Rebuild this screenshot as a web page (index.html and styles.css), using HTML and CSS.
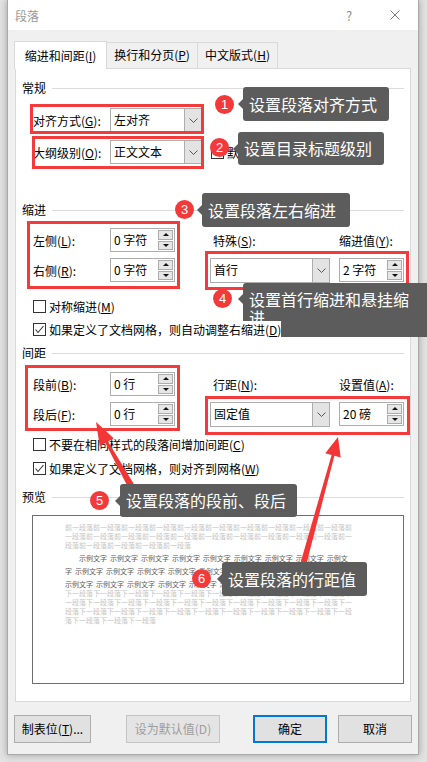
FILE: index.html
```html
<!DOCTYPE html>
<html>
<head>
<meta charset="utf-8">
<title>段落</title>
<link rel="stylesheet" href="styles.css">
</head>
<body>
<div id="window">
  <div id="titlebar">
    <span class="title">段落</span>
    <span class="capbtn">?</span>
    <span class="capbtn">
      <svg width="10" height="10" viewBox="0 0 10 10"><path d="M0.5 0.5L9.5 9.5M9.5 0.5L0.5 9.5" stroke="#7a7a7a" stroke-width="1" fill="none"/></svg>
    </span>
  </div>

  <div id="tabs">
    <div class="tab active t1">缩进和间距(<u>I</u>)</div>
    <div class="tab t2">换行和分页(<u>P</u>)</div>
    <div class="tab t3">中文版式(<u>H</u>)</div>
  </div>

  <div id="panel">
    <div class="group">常规<span class="rule"></span></div>
    <div class="row first">
      <span class="label">对齐方式(<u>G</u>):</span>
      <div class="combo"><span class="val">左对齐</span><span class="drop"><svg width="9" height="5" viewBox="0 0 9 5"><polyline points="0.5,0.5 4.5,4.5 8.5,0.5" fill="none" stroke="#555"/></svg></span></div>
    </div>
    <div class="row">
      <span class="label">大纲级别(<u>O</u>):</span>
      <div class="combo"><span class="val">正文文本</span><span class="drop"><svg width="9" height="5" viewBox="0 0 9 5"><polyline points="0.5,0.5 4.5,4.5 8.5,0.5" fill="none" stroke="#555"/></svg></span></div>
      <span class="check fold"><span class="box"></span>默认情况下折叠(<u>E</u>)</span>
    </div>

    <div class="group g-indent">缩进<span class="rule"></span></div>
    <div class="grid g1">
      <span class="label">左侧(<u>L</u>):</span>
      <div class="spin"><span class="val">0 字符</span><span class="arrows"><span class="up"></span><span class="down"></span></span></div>
      <span class="label side">特殊(<u>S</u>):</span>
      <span class="label">缩进值(<u>Y</u>):</span>
      <span class="label">右侧(<u>R</u>):</span>
      <div class="spin"><span class="val">0 字符</span><span class="arrows"><span class="up"></span><span class="down"></span></span></div>
      <div class="combo wide"><span class="val">首行</span><span class="drop"><svg width="9" height="5" viewBox="0 0 9 5"><polyline points="0.5,0.5 4.5,4.5 8.5,0.5" fill="none" stroke="#555"/></svg></span></div>
      <div class="spin"><span class="val">2 字符</span><span class="arrows"><span class="up"></span><span class="down"></span></span></div>
    </div>
    <div class="check c1"><span class="box"></span>对称缩进(<u>M</u>)</div>
    <div class="check c2"><span class="box on"><svg width="11" height="11" viewBox="0 0 11 11"><polyline points="1.5,5.5 4,8.5 9.5,2" fill="none" stroke="#333" stroke-width="1.1"/></svg></span><span class="raised">如果定义了文档网格，则自动调整右缩进(<u>D</u>)</span></div>

    <div class="group g-space">间距<span class="rule"></span></div>
    <div class="grid g2">
      <span class="label">段前(<u>B</u>):</span>
      <div class="spin"><span class="val">0 行</span><span class="arrows"><span class="up"></span><span class="down"></span></span></div>
      <span class="label side">行距(<u>N</u>):</span>
      <span class="label">设置值(<u>A</u>):</span>
      <span class="label">段后(<u>F</u>):</span>
      <div class="spin"><span class="val">0 行</span><span class="arrows"><span class="up"></span><span class="down"></span></span></div>
      <div class="combo wide"><span class="val">固定值</span><span class="drop"><svg width="9" height="5" viewBox="0 0 9 5"><polyline points="0.5,0.5 4.5,4.5 8.5,0.5" fill="none" stroke="#555"/></svg></span></div>
      <div class="spin"><span class="val">20 磅</span><span class="arrows"><span class="up"></span><span class="down"></span></span></div>
    </div>
    <div class="check c3"><span class="box"></span>不要在相同样式的段落间增加间距(<u>C</u>)</div>
    <div class="check c4"><span class="box on"><svg width="11" height="11" viewBox="0 0 11 11"><polyline points="1.5,5.5 4,8.5 9.5,2" fill="none" stroke="#333" stroke-width="1.1"/></svg></span>如果定义了文档网格，则对齐到网格(<u>W</u>)</div>

    <div class="group g-preview">预览<span class="rule"></span></div>
    <div class="preview">
      <p class="ghost">前一段落前一段落前一段落前一段落前一段落前一段落前一段落前一段落前一段落前一段落前一段落前一段落前一段落前一段落前一段落前一段落前一段落前一段落前一段落前一段落前一段落前一段落前一段落前一段落前一段落</p>
      <p class="sample">示例文字 示例文字 示例文字 示例文字 示例文字 示例文字 示例文字 示例文字 示例文字 示例文字 示例文字 示例文字 示例文字 示例文字 示例文字 示例文字 示例文字 示例文字 示例文字 示例文字 示例文字 示例文字 示例文字 示例文字 示例文字 示例文字</p>
      <p class="ghost after">下一段落下一段落下一段落下一段落下一段落下一段落下一段落下一段落下一段落下一段落下一段落下一段落下一段落下一段落下一段落下一段落下一段落下一段落下一段落下一段落下一段落下一段落下一段落下一段落下一段落下一段落下一段落下一段落下一段落下一段落下一段落下一段落下一段落下一段落</p>
    </div>
  </div>

  <div class="buttons">
    <div class="btn tabstop">制表位(<u>T</u>)...</div>
    <div class="btn disabled">设为默认值(D)</div>
    <div class="btn ok">确定</div>
    <div class="btn cancel">取消</div>
  </div>
</div>

<!-- callouts -->
<div class="hl hl1"></div>
<div class="hl hl2"></div>
<div class="hl hl3"></div>
<div class="hl hl4"></div>
<div class="hl hl5"></div>
<div class="hl hl6"></div>

<svg class="arrows-layer" width="427" height="762" viewBox="0 0 427 762">
  <polygon points="96,422 113.7,438.3 108,441.5 135.5,486.7 129.4,490.1 105.4,442.9 99.7,446.1" fill="#f23636"/>
  <polygon points="338,437 340.7,457.4 334.4,455.7 305.9,565.8 300.1,564.2 331.6,454.9 325.3,453.2" fill="#f23636"/>
</svg>

<div class="tip tip1">设置段落对齐方式</div>
<div class="tip tip2">设置目录标题级别</div>
<div class="tip tip3">设置段落左右缩进</div>
<div class="tip tip4">设置首行缩进和悬挂缩进</div>
<div class="tip tip5">设置段落的段前、段后</div>
<div class="tip tip6">设置段落的行距值</div>

<div class="badge b1">1</div>
<div class="badge b2">2</div>
<div class="badge b3">3</div>
<div class="badge b4">4</div>
<div class="badge b5">5</div>
<div class="badge b6">6</div>
</body>
</html>
```

FILE: styles.css
```css
* {
box-sizing: border-box;
}

body {
margin: 0;
width: 427px;
height: 762px;
overflow: hidden;
position: relative;
background: #e2e2e2;
font-family: "Noto Sans CJK SC", "Noto Sans", sans-serif;
font-size: 12px;
color: #000;
}

u {
text-underline-offset: 1px;
}

/* dialog frame */
#window {
margin-left: 7px;
width: 412px;
height: 755px;
background: #f0f0f0;
border: 1px solid #a9a9a9;
border-top: 0;
box-shadow: 0 0 7px rgba(0, 0, 0, 0.3);
}

#titlebar {
height: 30px;
background: #fff;
display: flex;
align-items: center;
padding-left: 7px;
}

#titlebar .title {
flex: 1;
color: #9a9a9a;
}

.capbtn {
width: 46px;
height: 30px;
display: flex;
align-items: center;
justify-content: center;
color: #8c8c8c;
font-size: 13px;
}

/* tabs */
#tabs {
margin-top: 10px;
height: 28px;
display: flex;
align-items: flex-end;
padding-left: 6px;
}

.tab {
height: 26px;
line-height: 24px;
border: 1px solid #d9d9d9;
border-bottom: 0;
background: #f0f0f0;
text-align: center;
margin-right: -1px;
}

.tab.active {
height: 28px;
line-height: 28px;
background: #fff;
position: relative;
z-index: 1;
margin-bottom: -1px;
}

.t1 { width: 93px; }
.t2 { width: 92px; }
.t3 { width: 81px; }

#panel {
margin-left: 7px;
width: 396px;
height: 634px;
background: #fff;
border: 1px solid #d9d9d9;
padding: 11px 0 0 6px;
}

/* group headings with rule */
.group {
display: flex;
align-items: center;
height: 16px;
line-height: 16px;
}

.group .rule {
flex: 1;
height: 1px;
background: #dcdcdc;
margin: 0 6px 0 6px;
}

.g-indent { margin-top: 38px; }
.g-space { margin-top: 8px; }
.g-preview { margin-top: 13px; }

.row {
display: flex;
align-items: center;
height: 24px;
padding-left: 11px;
margin-top: 8px;
}

.row.first {
margin-top: 12px;
}

.label {
width: 77px;
flex: none;
white-space: nowrap;
}

.grid .label {
width: auto;
}

.label.side {
padding-left: 3px;
}

/* combo boxes */
.combo {
width: 92px;
height: 24px;
border: 1px solid #adadad;
background: #fff;
display: flex;
flex: none;
}

.combo.wide {
width: 120px;
height: 25px;
}

.combo .val,
.spin .val {
flex: 1;
padding-left: 3px;
line-height: 22px;
white-space: nowrap;
}

.combo .drop {
width: 17px;
background: #e3e3e3;
border-left: 1px solid #adadad;
display: flex;
align-items: center;
justify-content: center;
}

/* spinners */
.spin {
width: 65px;
height: 24px;
border: 1px solid #adadad;
background: #fff;
display: flex;
}

.spin .arrows {
width: 16px;
display: flex;
flex-direction: column;
padding: 1px 1px 1px 0;
gap: 1px;
}

.spin .up,
.spin .down {
flex: 1;
background: #e6e6e6;
border: 1px solid #acacac;
display: flex;
align-items: center;
justify-content: center;
}

.spin .up::after {
content: "";
border-left: 3px solid transparent;
border-right: 3px solid transparent;
border-bottom: 3px solid #111;
}

.spin .down::after {
content: "";
border-left: 3px solid transparent;
border-right: 3px solid transparent;
border-top: 3px solid #111;
}

.grid {
display: grid;
grid-template-columns: 77px 100px 129px 65px;
grid-template-rows: 24px 24px;
row-gap: 6px;
align-items: center;
padding-left: 11px;
}

.g1 { margin-top: 10px; }
.g2 { margin-top: 11px; }

/* check boxes */
.check {
display: flex;
align-items: center;
height: 16px;
padding-left: 11px;
white-space: nowrap;
}

.check .box {
width: 13px;
height: 13px;
border: 1px solid #333;
background: #fff;
margin-right: 3px;
display: flex;
align-items: center;
justify-content: center;
flex: none;
}

.fold { padding-left: 9px; }
.c1 { margin-top: 16px; }
.c2 { margin-top: 7px; }
.c3 { margin-top: 10px; }
.c4 { margin-top: 8px; }

.raised {
position: relative;
z-index: 6;
background: #fff;
}

/* preview pane */
.preview {
margin: 10px 0 0 10px;
width: 372px;
height: 169px;
border: 1px solid #6e6e6e;
background: #fff;
padding: 7px 0 0 32px;
}

.preview p {
margin: 0;
width: 288px;
font-size: 7px;
line-height: 9px;
}

.preview .ghost {
color: #c4c4c4;
}

.preview .sample {
color: #5c5c5c;
line-height: 13px;
text-indent: 14px;
word-spacing: 1.4px;
margin-top: 2px;
}

.preview .after {
margin-top: -2px;
}

/* bottom buttons */
.buttons {
display: flex;
margin-top: 13px;
padding-left: 6px;
}

.btn {
height: 28px;
line-height: 26px;
border: 1px solid #adadad;
background: #e1e1e1;
text-align: center;
}

.tabstop { width: 77px; }

.disabled {
width: 94px;
margin-left: 35px;
color: #9d9d9d;
border-color: #c4c4c4;
background: #e4e4e4;
}

.ok {
width: 74px;
margin-left: 33px;
border: 2px solid #0078d7;
line-height: 24px;
}

.cancel {
width: 74px;
margin-left: 11px;
}

/* red highlight frames */
.hl {
position: absolute;
border: 3px solid #f33b3b;
z-index: 2;
}

.hl1 { left: 30px; top: 104px; width: 174px; height: 30px; }
.hl2 { left: 32px; top: 136px; width: 172px; height: 33px; }
.hl3 { left: 27px; top: 221px; width: 153px; height: 68px; }
.hl4 { left: 205px; top: 251px; width: 204px; height: 39px; }
.hl5 { left: 25px; top: 365px; width: 155px; height: 66px; }
.hl6 { left: 205px; top: 396px; width: 205px; height: 39px; }

.arrows-layer {
position: absolute;
left: 0;
top: 0;
z-index: 3;
}

/* dark callout notes */
.tip {
position: absolute;
background: #5c5c5c;
color: #fff;
font-size: 16px;
border-radius: 3px;
padding-left: 6px;
white-space: nowrap;
z-index: 5;
}

.tip::before {
content: "";
position: absolute;
left: -5px;
top: calc(50% - 5px);
border-top: 5px solid transparent;
border-bottom: 5px solid transparent;
border-right: 5px solid #5c5c5c;
}

.tip1 { left: 243px; top: 87px; width: 146px; height: 34px; line-height: 34px; }
.tip2 { left: 238px; top: 132px; width: 146px; height: 33px; line-height: 33px; }
.tip3 { left: 202px; top: 193px; width: 148px; height: 34px; line-height: 34px; }
.tip5 { left: 120px; top: 484px; width: 177px; height: 33px; line-height: 33px; }
.tip6 { left: 222px; top: 562px; width: 145px; height: 34px; line-height: 34px; }

.tip4 {
left: 243px;
top: 283px;
width: 200px;
height: 54px;
padding: 7px 30px 0 6px;
line-height: 18px;
white-space: normal;
word-break: break-all;
}

.tip4::before {
top: 11px;
}

/* numbered markers */
.badge {
position: absolute;
width: 19px;
height: 19px;
border-radius: 50%;
background: #f23a3a;
color: #fff;
font-family: "Liberation Sans", sans-serif;
font-size: 13px;
line-height: 19px;
text-align: center;
z-index: 7;
}

.b1 { left: 215px; top: 95px; }
.b2 { left: 210px; top: 138px; }
.b3 { left: 175px; top: 200px; }
.b4 { left: 213px; top: 289px; }
.b5 { left: 90px; top: 491px; }
.b6 { left: 192px; top: 569px; }
```
